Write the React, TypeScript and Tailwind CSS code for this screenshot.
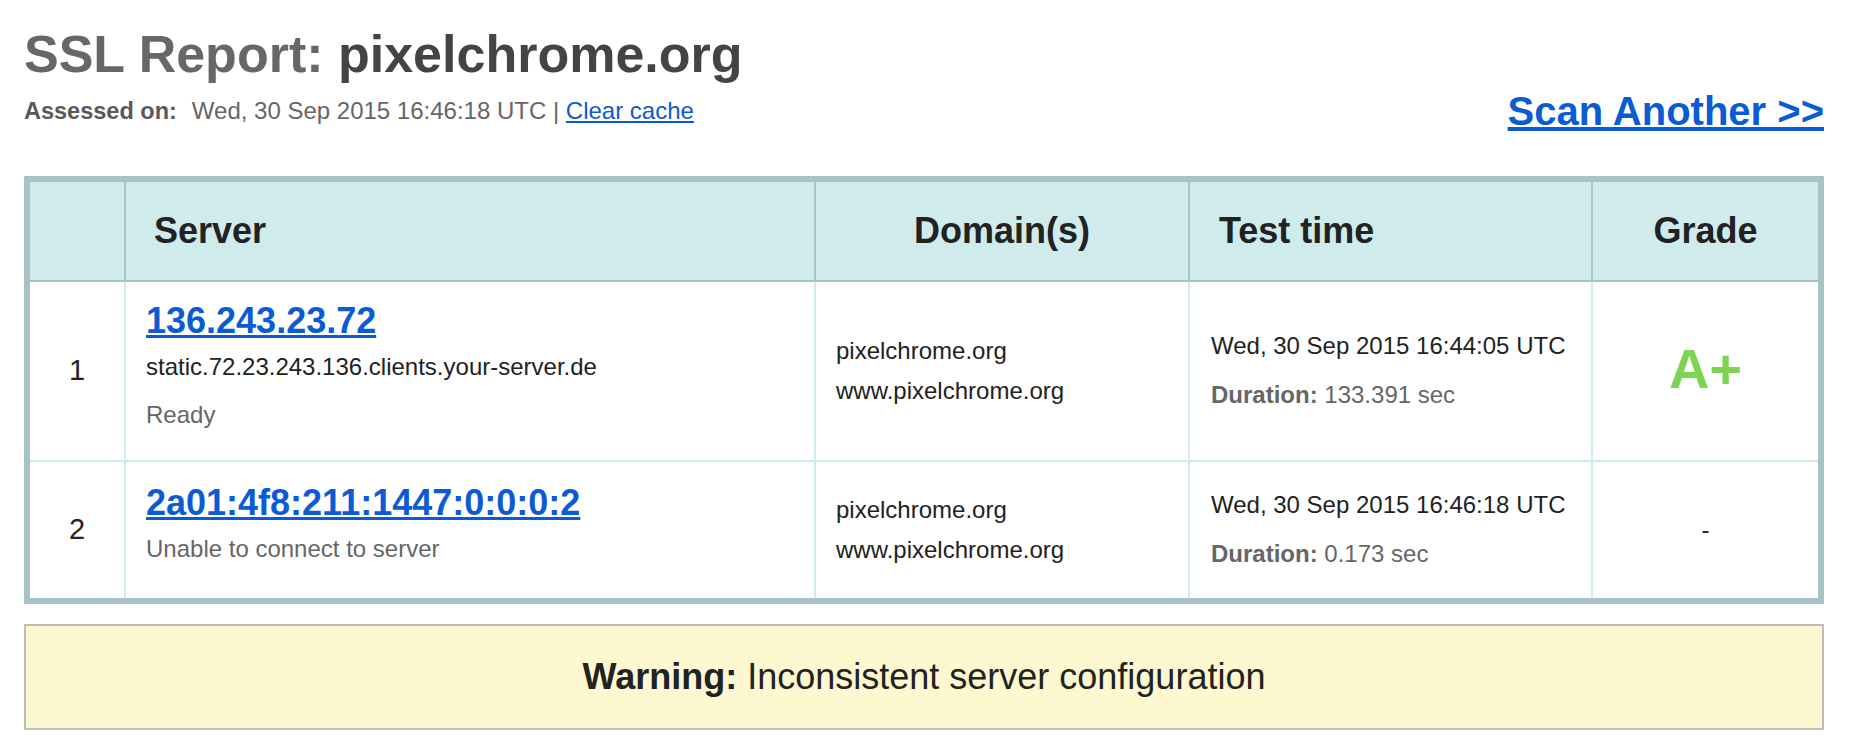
const cols = 'grid grid-cols-[94px_690px_374px_403px_227px]';

type Row = {
  n: string;
  ip: string;
  host?: string;
  status: string;
  time: string;
  duration: string;
  grade: string;
  pt: string;
  h: string;
};

const rows: Row[] = [
  {
    n: '1',
    ip: '136.243.23.72',
    host: 'static.72.23.243.136.clients.your-server.de',
    status: 'Ready',
    time: 'Wed, 30 Sep 2015 16:44:05 UTC',
    duration: '133.391 sec',
    grade: 'A+',
    pt: 'pt-[18px]',
    h: 'h-[180px] border-b-2 border-[#cfe9ec]',
  },
  {
    n: '2',
    ip: '2a01:4f8:211:1447:0:0:0:2',
    status: 'Unable to connect to server',
    time: 'Wed, 30 Sep 2015 16:46:18 UTC',
    duration: '0.173 sec',
    grade: '-',
    pt: 'pt-[20px]',
    h: 'h-[136px]',
  },
];

export default function App() {
  return (
    <div className="min-h-screen bg-white pl-[24px] pr-[26px] font-['Liberation_Sans',Arial,Helvetica,sans-serif]">
      {/* header */}
      <div className="flex justify-between pt-[24px]">
        <div>
          <h1 className="text-[52px] leading-[60px] font-bold text-[#676767]">
            SSL Report: <span className="text-[#444]">pixelchrome.org</span>
          </h1>
          <div className="mt-[13px] text-[24px] leading-[28px] text-[#666]">
            <span className="text-[23.5px] font-bold text-[#595959]">Assessed on:</span>
            <span className="ml-[15px]">Wed, 30 Sep 2015 16:46:18 UTC | </span>
            <a href="#" className="text-[#0b5bd2] underline">
              Clear cache
            </a>
          </div>
        </div>
        <a
          href="#"
          className="mt-[64px] self-start text-[40px] leading-[46px] font-bold text-[#0b5bd2] underline"
        >
          Scan Another &gt;&gt;
        </a>
      </div>

      {/* report table */}
      <div className="mt-[42px] border-[6px] border-[#a7c3c5] text-[#222]">
        <div className={`${cols} h-[100px] bg-[#cfebec] border-b-2 border-[#a7c3c5] text-[36px] font-bold`}>
          <div />
          <div className="flex items-center border-l-2 border-[#a7c3c5] pl-[28px]">Server</div>
          <div className="flex items-center justify-center border-l-2 border-[#a7c3c5]">Domain(s)</div>
          <div className="flex items-center border-l-2 border-[#a7c3c5] pl-[29px]">Test time</div>
          <div className="flex items-center justify-center border-l-2 border-[#a7c3c5]">Grade</div>
        </div>

        {rows.map((r) => (
          <div key={r.n} className={`${cols} ${r.h} text-[24px]`}>
            <div className="flex items-center justify-center text-[29px]">{r.n}</div>
            <div className={`border-l-2 border-[#cfe9ec] pl-[20px] ${r.pt}`}>
              <a href="#" className="block text-[36px] leading-[42px] font-bold text-[#0b5bd2] underline">
                {r.ip}
              </a>
              {r.host && <div className="mt-[10px] leading-[30px]">{r.host}</div>}
              <div className={`${r.host ? 'mt-[18px]' : 'mt-[10px]'} leading-[30px] text-[#666]`}>{r.status}</div>
            </div>
            <div className="flex flex-col justify-center border-l-2 border-[#cfe9ec] pl-[20px] leading-[40px]">
              <div>pixelchrome.org</div>
              <div>www.pixelchrome.org</div>
            </div>
            <div className="flex flex-col justify-center border-l-2 border-[#cfe9ec] pl-[21px] pb-[2px]">
              <div className="leading-[30px]">{r.time}</div>
              <div className="mt-[19px] leading-[30px] text-[#666]">
                <span className="font-bold">Duration:</span> {r.duration}
              </div>
            </div>
            <div className="flex items-center justify-center border-l-2 border-[#cfe9ec]">
              {r.grade === 'A+' ? (
                <span className="pb-[4px] text-[56px] leading-none font-bold text-[#7dd452]">A+</span>
              ) : (
                <span>{r.grade}</span>
              )}
            </div>
          </div>
        ))}
      </div>

      {/* warning */}
      <div className="mt-[20px] flex h-[106px] items-center justify-center border-2 border-[#bdbdbd] bg-[#fdf8d0] text-[36px] text-[#222]">
        <span className="font-bold">Warning:</span>
        <span className="ml-[10px]">Inconsistent server configuration</span>
      </div>
    </div>
  );
}
